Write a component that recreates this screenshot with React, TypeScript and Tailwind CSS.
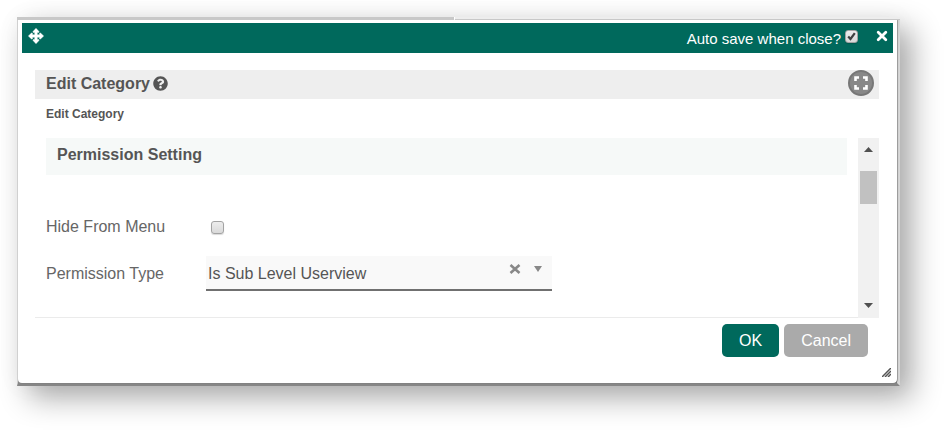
import { useState } from "react";
import { FaQuestionCircle } from "react-icons/fa";

const checkbox =
  "h-[13px] w-[13px] shrink-0 appearance-none rounded-[3px] border border-[#a3a3a3] bg-linear-to-b from-[#ededed] to-[#d9d9d9] shadow-[0_1px_1px_rgba(0,0,0,0.15)]";

function MoveIcon() {
  return (
    <svg viewBox="0 0 16 16" className="mt-[5px] ml-[6px] h-4 w-4" fill="currentColor" aria-hidden="true">
      <path
        d="M8 .3 11 3.500Q11.300 4.500 10.500 4.500H9.300V6.700H11.500V5.500Q11.500 4.700 12.500 5L15.700 8 12.500 11Q11.500 11.300 11.500 10.500V9.300H9.300V11.500H10.500Q11.300 11.500 11 12.500L8 15.700 5 12.500Q4.700 11.500 5.500 11.500H6.700V9.300H4.500V10.500Q4.500 11.300 3.500 11L.3 8 3.500 5Q4.500 4.700 4.500 5.500V6.700H6.700V4.500H5.500Q4.700 4.500 5 3.500Z"
        stroke="currentColor"
        strokeWidth="0.4"
        strokeLinejoin="round"
      />
    </svg>
  );
}

function TitleBar() {
  const [autoSave, setAutoSave] = useState(true);
  return (
    <header className="flex h-[30px] items-start bg-[#00695c] text-white">
      <MoveIcon />
      <label htmlFor="autosave" className="mt-1 ml-auto text-[15px] leading-6">
        Auto save when close?
      </label>
      <span className="relative mt-[7px] ml-1 flex">
        <input
          id="autosave"
          type="checkbox"
          checked={autoSave}
          onChange={(e) => setAutoSave(e.target.checked)}
          className={checkbox}
        />
        {autoSave && (
          <svg viewBox="0 0 13 13" className="pointer-events-none absolute inset-0 h-[13px] w-[13px]" aria-hidden="true">
            <path d="M3.200 6.500 5.500 9 9.800 3.200" fill="none" stroke="#3f3f3f" strokeWidth="2.2" />
          </svg>
        )}
      </span>
      <button type="button" aria-label="Close" className="mt-[7px] mr-[5px] ml-[18px]">
        <svg viewBox="0 0 12 12" className="h-3 w-3" aria-hidden="true">
          <path d="M2.200 2.200l7.600 7.600M9.800 2.200l-7.600 7.600" stroke="currentColor" strokeWidth="2.8" strokeLinecap="round" />
        </svg>
      </button>
    </header>
  );
}

function ScrollRail() {
  return (
    <div className="flex w-[21px] shrink-0 flex-col items-center bg-[#f1f1f1] text-[#505050]">
      <button type="button" aria-label="Scroll up" className="flex h-[33px] w-full justify-center pt-[9px]">
        <svg viewBox="0 0 9 5" className="h-[5px] w-[9px]" aria-hidden="true">
          <path d="M0 5 4.500 0 9 5z" fill="currentColor" />
        </svg>
      </button>
      <div className="h-[33px] w-[17px] bg-[#c1c1c1]" />
      <button type="button" aria-label="Scroll down" className="mt-auto flex h-5 w-full justify-center pt-[5px]">
        <svg viewBox="0 0 9 5" className="h-[5px] w-[9px]" aria-hidden="true">
          <path d="M0 0h9L4.500 5z" fill="currentColor" />
        </svg>
      </button>
    </div>
  );
}

function PermissionForm() {
  return (
    <div className="flex min-w-0 grow flex-col border-b border-[#ebebeb] pr-[11px] pb-[26px] pl-[11px]">
      <h3 className="h-[37px] bg-[#f6f9f8] px-[11px] pt-[5px] text-base leading-6 font-bold text-[#555555]">
        Permission Setting
      </h3>
      <div className="mt-10 flex h-6 items-center">
        <label htmlFor="hide" className="w-40 text-base leading-6">
          Hide From Menu
        </label>
        <input id="hide" type="checkbox" className={`${checkbox} ml-[5px]`} />
      </div>
      <div className="mt-[17px] flex h-[35px] items-center">
        <label htmlFor="type" className="w-40 text-base leading-6">
          Permission Type
        </label>
        <div className="relative w-[346px]">
          <select
            id="type"
            className="block h-[35px] w-full appearance-none border-b-2 border-[#707070] bg-[#f9f9f9] pt-[2px] pl-[2px] text-base text-[#555555]"
          >
            <option>Is Sub Level Userview</option>
          </select>
          <button type="button" aria-label="Clear" className="absolute top-[8px] right-[31px] flex text-[#888888]">
            <svg viewBox="0 0 12 10" className="h-[10px] w-3" aria-hidden="true">
              <path d="M1.500 1l9 8M10.500 1l-9 8" stroke="currentColor" strokeWidth="2.6" />
            </svg>
          </button>
          <svg
            viewBox="0 0 8 6"
            className="pointer-events-none absolute top-[10px] right-[10px] h-[6px] w-2 text-[#888888]"
            aria-hidden="true"
          >
            <path d="M0 0h8L4 6z" fill="currentColor" />
          </svg>
        </div>
      </div>
    </div>
  );
}

export default function App() {
  return (
    <main className="overflow-hidden bg-white pt-[17px] pr-12 pb-12 pl-[17px] font-['Liberation_Sans',Arial,sans-serif] text-[#666666]">
      <div className="shadow-[12px_12px_28px_rgba(0,0,0,0.33),0_0_24px_rgba(0,0,0,0.04)]">
        <div className="flex h-[3px] bg-white">
          <div className="w-[437px] bg-[#c8c8c8]" />
          <div className="ml-px grow border-b border-[#c8c8c8] bg-[#ededed]" />
        </div>
        <div className="border-r-3 border-b-3 border-l border-r-[#d8d8d8] border-b-[#868686] border-l-[#d0d0d0] bg-[#868686]">
          <section
            role="dialog"
            aria-label="Edit Category"
            className="rounded-b bg-white px-1 pt-[3px] shadow-[1px_0_1px_rgba(0,0,0,0.3)]"
          >
            <TitleBar />
            <div className="pt-[17px] pr-[14px] pl-[13px]">
              <div className="flex h-[29px] items-center bg-[#eeeeee] pr-[5px] pl-[11px]">
                <h2 className="flex items-center gap-[3px] pb-[2px] text-base leading-6 font-bold text-[#555555]">
                  Edit Category
                  <FaQuestionCircle className="h-[15px] w-[15px]" aria-hidden="true" />
                </h2>
                <button
                  type="button"
                  aria-label="Full screen"
                  className="mb-[3px] ml-auto flex h-[26px] w-[26px] items-center justify-center rounded-full border-2 border-[#777777] bg-[#888888] text-white"
                >
                  <svg viewBox="0 0 14 14" className="h-[14px] w-[14px]" aria-hidden="true">
                    <path
                      d="M1.500 5V1.500H5M9 1.500h3.500V5M12.500 9v3.500H9M5 12.500H1.500V9"
                      fill="none"
                      stroke="currentColor"
                      strokeWidth="2.6"
                    />
                  </svg>
                </button>
              </div>
              <p className="h-[39px] pt-[5px] pl-[11px] text-xs leading-5 font-bold text-[#555555]">Edit Category</p>
              <div className="flex">
                <PermissionForm />
                <ScrollRail />
              </div>
              <div className="flex justify-end gap-[5px] pt-[6px] pr-[11px]">
                <button type="button" className="h-[33px] rounded-[5px] bg-[#00695c] px-[17px] text-base leading-6 text-white">
                  OK
                </button>
                <button type="button" className="h-[33px] rounded-[5px] bg-[#aaaaaa] px-[17px] text-base leading-6 text-white">
                  Cancel
                </button>
              </div>
            </div>
            <div className="flex h-[26px] items-end justify-end pr-[6px] pb-[6px] -mr-1">
              <svg viewBox="0 0 9 9" className="h-[9px] w-[9px]" aria-hidden="true">
                <path d="M0 9 9 0M3 9 9 3M6 9 9 6" stroke="#555555" strokeWidth="1.500" />
              </svg>
            </div>
          </section>
        </div>
      </div>
    </main>
  );
}
